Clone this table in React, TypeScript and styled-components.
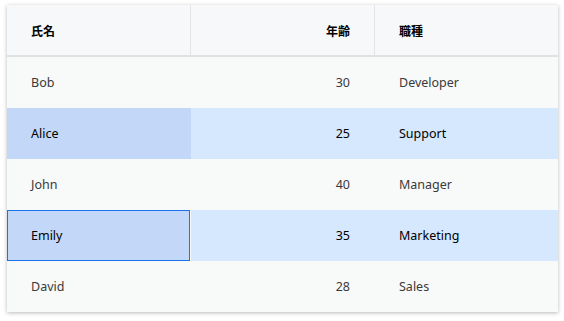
import React from "react";
import styled, { createGlobalStyle } from "styled-components";

const GlobalStyle = createGlobalStyle`
  html, body {
    margin: 0;
    padding: 0;
    background: #ffffff;
  }

  body {
    font-family: "Noto Sans", "Noto Sans CJK JP", sans-serif;
  }
`;

const Page = styled.div`
  padding: 5px 6px 0 7px;
  width: 564px;
  height: 321px;
  box-sizing: border-box;
`;

const Grid = styled.div`
  display: grid;
  grid-template-columns: 184px 184px 183px;
  width: 551px;
  background: #f8f9f9;
  box-shadow: 0 1px 4px rgba(0, 0, 0, 0.28);
`;

const HeaderCell = styled.div<{ $align?: "left" | "right"; $last?: boolean }>`
  display: flex;
  align-items: center;
  justify-content: ${(p) => (p.$align === "right" ? "flex-end" : "flex-start")};
  height: 50px;
  padding: 0 24px;
  box-sizing: content-box;
  background: #f7f8fa;
  border-bottom: 2px solid #dfe1e4;
  border-right: ${(p) => (p.$last ? "none" : "1px solid #e2e4e7")};
  font-family: "Noto Sans CJK JP", sans-serif;
  font-size: 12px;
  font-weight: 700;
  color: #000000;
`;

const Cell = styled.div<{
  $align?: "left" | "right";
  $selected?: boolean;
  $active?: boolean;
  $focused?: boolean;
}>`
  display: flex;
  align-items: center;
  justify-content: ${(p) => (p.$align === "right" ? "flex-end" : "flex-start")};
  height: 51px;
  padding: 0 25px 0 24px;
  box-sizing: border-box;
  font-size: 12.5px;
  color: ${(p) => (p.$selected ? "#000000" : "#3a3a3a")};
  background: ${(p) =>
    p.$active ? "#c3d8f8" : p.$selected ? "#d6e8fe" : "#f8f9f9"};
  border: ${(p) => (p.$focused ? "1px solid #1a73e8" : "0 solid transparent")};
  padding-left: ${(p) => (p.$focused ? "23px" : "24px")};
  margin-right: ${(p) => (p.$focused ? "1px" : "0")};
`;

type Person = {
  name: string;
  age: number;
  job: string;
  selected?: boolean;
  focused?: boolean;
};

const people: Person[] = [
  { name: "Bob", age: 30, job: "Developer" },
  { name: "Alice", age: 25, job: "Support", selected: true },
  { name: "John", age: 40, job: "Manager" },
  { name: "Emily", age: 35, job: "Marketing", selected: true, focused: true },
  { name: "David", age: 28, job: "Sales" },
];

export default function App() {
  return (
    <Page>
      <GlobalStyle />
      <Grid>
        <HeaderCell>氏名</HeaderCell>
        <HeaderCell $align="right">年齢</HeaderCell>
        <HeaderCell $last>職種</HeaderCell>
        {people.map((p) => (
          <React.Fragment key={p.name}>
            <Cell $selected={p.selected} $active={p.selected} $focused={p.focused}>
              {p.name}
            </Cell>
            <Cell $align="right" $selected={p.selected}>
              {p.age}
            </Cell>
            <Cell $selected={p.selected}>{p.job}</Cell>
          </React.Fragment>
        ))}
      </Grid>
    </Page>
  );
}
